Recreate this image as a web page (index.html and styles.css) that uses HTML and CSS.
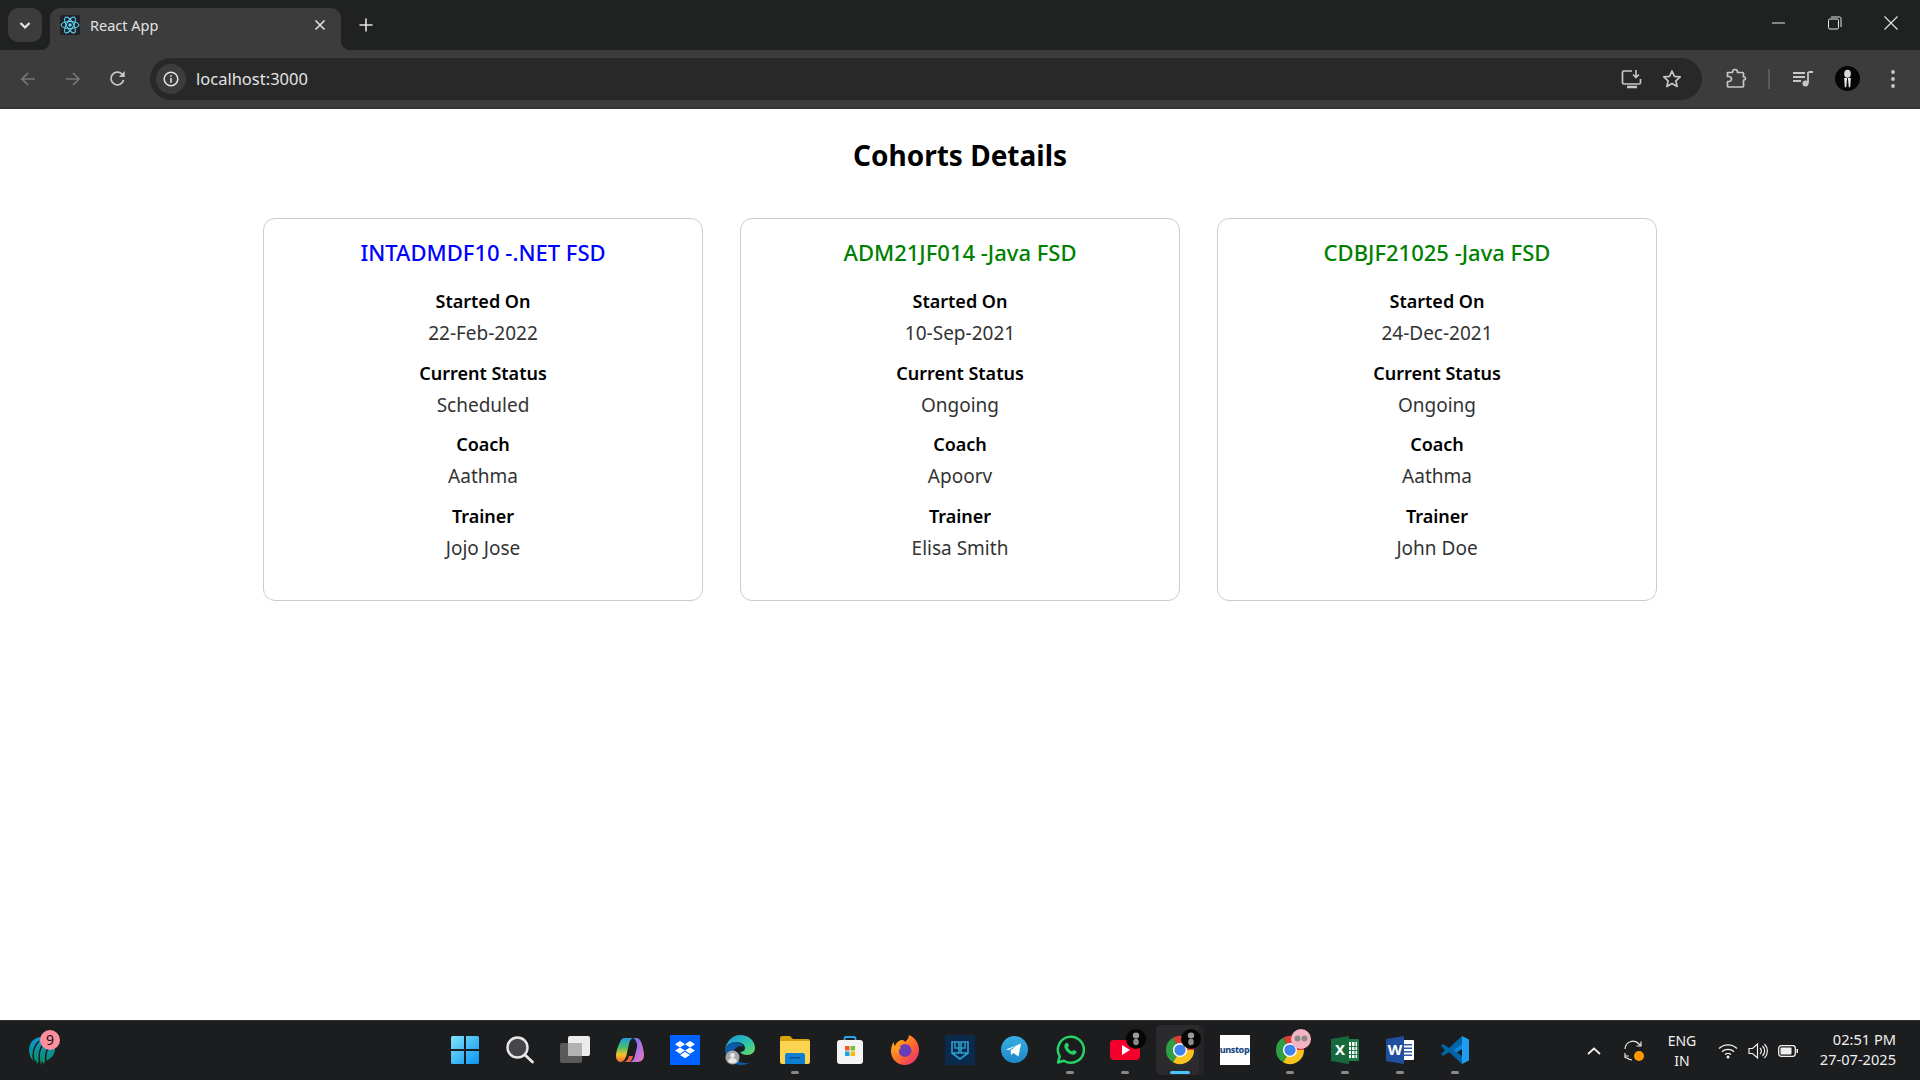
FILE: index.html
```html
<!DOCTYPE html>
<html lang="en">
<head>
  <meta charset="UTF-8">
  <title>React App</title>
  <link rel="stylesheet" href="styles.css">
</head>
<body>
  <svg class="defs" width="0" height="0">
    <symbol id="chrome" viewBox="0 0 32 32">
      <path fill="#db3f33" d="M16 16L8.500 3A15 15 0 0 1 31 16Z"/>
      <path fill="#f9c21e" d="M16 16L31 16A15 15 0 0 1 8.500 29Z"/>
      <path fill="#2f9e44" d="M16 16L8.500 29A15 15 0 0 1 8.500 3Z"/>
      <circle cx="16" cy="16" r="7.600" fill="#fff"/>
      <circle cx="16" cy="16" r="6" fill="#3f83ee"/>
    </symbol>
    <symbol id="person" viewBox="0 0 24 24">
      <circle cx="12" cy="12" r="12" fill="#050505"/>
      <ellipse cx="12" cy="7.500" rx="3.200" ry="3.800" fill="#d8d8d8"/>
      <path fill="#e8e8e8" d="M8.800 11.500h6.400l-.6 9h-1.400l-.6-7h-1.200l-.6 7H9.400z"/>
      <path fill="#111" d="M11.500 11.500h1v6h-1z"/>
    </symbol>
    <symbol id="person-badge" viewBox="0 0 20 20">
      <circle cx="10" cy="10" r="10" fill="#050505"/>
      <ellipse cx="10" cy="6.500" rx="3.200" ry="3" fill="#9a9a9a"/>
      <ellipse cx="10" cy="13" rx="2.800" ry="3.200" fill="#8a8a8a"/>
    </symbol>
  </svg>

  <div class="tabstrip">
    <button class="tab-list">
      <svg width="14" height="14" viewBox="0 0 14 14"><path d="M2.500 5l4.500 4.500L11.500 5" fill="none" stroke="#e8e8e8" stroke-width="2.200"/></svg>
    </button>
    <div class="tab">
      <svg class="favicon" width="20" height="20" viewBox="0 0 20 20">
        <rect width="20" height="20" rx="2" fill="#20232a"/>
        <g fill="none" stroke="#61dafb" stroke-width="1">
          <ellipse cx="10" cy="10" rx="9" ry="3.500"/>
          <ellipse cx="10" cy="10" rx="9" ry="3.500" transform="rotate(60 10 10)"/>
          <ellipse cx="10" cy="10" rx="9" ry="3.500" transform="rotate(120 10 10)"/>
        </g>
        <circle cx="10" cy="10" r="1.700" fill="#61dafb"/>
      </svg>
      <span class="tab-title">React App</span>
      <svg class="tab-close" width="12" height="12" viewBox="0 0 12 12"><path d="M1.500 1.500l9 9M10.500 1.500l-9 9" stroke="#e3e3e3" stroke-width="1.600"/></svg>
    </div>
    <svg class="new-tab" width="14" height="14" viewBox="0 0 14 14"><path d="M7 .5v13M.5 7h13" stroke="#e3e3e3" stroke-width="1.600"/></svg>
    <div class="win-controls">
      <span class="win-btn"><svg width="14" height="14" viewBox="0 0 14 14"><path d="M0 7h13" stroke="#e6e6e6"/></svg></span>
      <span class="win-btn"><svg width="14" height="14" viewBox="0 0 14 14"><rect x=".5" y="3" width="10" height="10" rx="1.500" fill="none" stroke="#e6e6e6"/><path d="M3 1h8.500a1.500 1.500 0 0 1 1.500 1.500V11" fill="none" stroke="#e6e6e6"/></svg></span>
      <span class="win-btn"><svg width="14" height="14" viewBox="0 0 14 14"><path d="M.5.500l13 13M13.500.500l-13 13" stroke="#e6e6e6" stroke-width="1.100"/></svg></span>
    </div>
  </div>

  <div class="toolbar">
    <span class="tool-btn"><svg width="16" height="16" viewBox="0 0 16 16"><path d="M15 8H2M8 2L2 8l6 6" fill="none" stroke="#767676" stroke-width="1.700"/></svg></span>
    <span class="tool-btn"><svg width="16" height="16" viewBox="0 0 16 16"><path d="M1 8h13M8 2l6 6-6 6" fill="none" stroke="#767676" stroke-width="1.700"/></svg></span>
    <span class="tool-btn"><svg width="17" height="17" viewBox="0 0 16 16"><path d="M13.700 9.500A6 6 0 1 1 12 3.600L14 5.500" fill="none" stroke="#c7c7c7" stroke-width="1.700"/><path d="M14.800 1v5.500H9.300z" fill="#c7c7c7"/></svg></span>
    <div class="omnibox">
      <span class="info-chip"><svg width="16" height="16" viewBox="0 0 16 16"><circle cx="8" cy="8" r="6.800" fill="none" stroke="#e3e3e3" stroke-width="1.500"/><path d="M7.200 7h1.600v4.800H7.200zM7.200 4.200h1.600v1.600H7.200z" fill="#e3e3e3"/></svg></span>
      <span class="url">localhost:3000</span>
      <span class="omni-btn"><svg width="22" height="20" viewBox="0 0 22 20"><path d="M11 15H3a1.500 1.500 0 0 1-1.500-1.500v-10A1.500 1.500 0 0 1 3 2h8M19.500 10v3.500A1.500 1.500 0 0 1 18 15h-7" fill="none" stroke="#c7c7c7" stroke-width="1.700"/><path d="M6 18h10" stroke="#c7c7c7" stroke-width="2.500"/><path d="M15 1v7M12 5.500l3 3 3-3" fill="none" stroke="#c7c7c7" stroke-width="1.600"/></svg></span>
      <span class="omni-btn"><svg width="20" height="20" viewBox="0 0 20 20"><path d="M10 2l2.400 5.300 5.800.6-4.300 3.900 1.200 5.700-5.100-2.900-5.100 2.900 1.200-5.700-4.300-3.900 5.800-.6z" fill="none" stroke="#c7c7c7" stroke-width="1.700" stroke-linejoin="round"/></svg></span>
    </div>
    <span class="tool-btn ext-btn"><svg width="21" height="21" viewBox="0 0 21 21"><path d="M1.500 4.500H6.500V4a2.500 2.500 0 0 1 5 0v.5h5a1 1 0 0 1 1 1v3.500h.5a1.500 1.500 0 0 1 0 3h-.5v6a1 1 0 0 1-1 1h-14a1 1 0 0 1-1-1v-4.500H3a2.500 2.500 0 0 0 0-5H1.500z" fill="none" stroke="#c7c7c7" stroke-width="1.700" stroke-linejoin="round"/></svg></span>
    <span class="tool-sep"></span>
    <span class="tool-btn"><svg width="20" height="16" viewBox="0 0 20 16"><path d="M0 2h12M0 6h12M0 10h8" stroke="#c7c7c7" stroke-width="1.800"/><path d="M15.500 1H20" stroke="#c7c7c7" stroke-width="2"/><path d="M15 1v11" stroke="#c7c7c7" stroke-width="1.800"/><circle cx="12.500" cy="12.500" r="3" fill="#c7c7c7"/></svg></span>
    <span class="tool-btn"><svg width="25" height="25"><use href="#person"/></svg></span>
    <span class="tool-btn"><svg width="4" height="18" viewBox="0 0 4 18"><circle cx="2" cy="2" r="1.900" fill="#c7c7c7"/><circle cx="2" cy="9" r="1.900" fill="#c7c7c7"/><circle cx="2" cy="16" r="1.900" fill="#c7c7c7"/></svg></span>
  </div>

  <main class="page">
    <h1 class="page-title">Cohorts Details</h1>
    <div class="cohorts">
      <section class="cohort-card">
        <h3 class="cohort-name blue">INTADMDF10 -.NET FSD</h3>
        <dl>
          <dt>Started On</dt><dd>22-Feb-2022</dd>
          <dt>Current Status</dt><dd>Scheduled</dd>
          <dt>Coach</dt><dd>Aathma</dd>
          <dt>Trainer</dt><dd>Jojo Jose</dd>
        </dl>
      </section>
      <section class="cohort-card">
        <h3 class="cohort-name green">ADM21JF014 -Java FSD</h3>
        <dl>
          <dt>Started On</dt><dd>10-Sep-2021</dd>
          <dt>Current Status</dt><dd>Ongoing</dd>
          <dt>Coach</dt><dd>Apoorv</dd>
          <dt>Trainer</dt><dd>Elisa Smith</dd>
        </dl>
      </section>
      <section class="cohort-card">
        <h3 class="cohort-name green">CDBJF21025 -Java FSD</h3>
        <dl>
          <dt>Started On</dt><dd>24-Dec-2021</dd>
          <dt>Current Status</dt><dd>Ongoing</dd>
          <dt>Coach</dt><dd>Aathma</dd>
          <dt>Trainer</dt><dd>John Doe</dd>
        </dl>
      </section>
    </div>
  </main>

  <footer class="taskbar">
    <div class="task-left">
      <span class="widget">
        <svg width="28" height="29" viewBox="0 0 28 29">
          <defs><linearGradient id="wg" x1="0" y1="0" x2="0" y2="1"><stop offset="0" stop-color="#0a9bd8"/><stop offset="1" stop-color="#0b8a5c"/></linearGradient></defs>
          <path fill="url(#wg)" d="M1 14C1 6 7 1 14 1s13 5 13 12c0 6-5 11-10 12l-1 3-2-3-1 4-2-4-2 3-1-4-2 2C3 23 1 19 1 14z"/>
          <path d="M6 26C4 18 6 10 11 5M12 28c-2-8-1-15 4-21M18 26c-1-6 0-11 3-15" fill="none" stroke="#1c1d1f" stroke-width="1.500"/>
        </svg>
        <span class="widget-badge">9</span>
      </span>
    </div>
    <div class="task-apps">
      <span class="app"><svg width="30" height="30" viewBox="0 0 30 30"><defs><linearGradient id="win" x1="0" y1="0" x2="1" y2="1"><stop offset="0" stop-color="#7fe4fb"/><stop offset="1" stop-color="#0a94f0"/></linearGradient></defs><path fill="url(#win)" d="M1 2.500A1.500 1.500 0 0 1 2.500 1H14v13H1zM16 1h11.500A1.500 1.500 0 0 1 29 2.500V14H16zM1 16h13v13H2.500A1.500 1.500 0 0 1 1 27.500zM16 16h13v11.500a1.500 1.500 0 0 1-1.500 1.500H16z"/></svg></span>
      <span class="app"><svg width="30" height="30" viewBox="0 0 30 30"><circle cx="12.500" cy="12.500" r="10" fill="#46464a" stroke="#e8e8e8" stroke-width="2.400"/><path d="M20 20l7.500 7" stroke="#e8e8e8" stroke-width="2.800" stroke-linecap="round"/></svg></span>
      <span class="app"><svg width="30" height="30" viewBox="0 0 30 30"><rect x="0" y="8" width="22" height="20" rx="2" fill="#5a5a5a"/><rect x="8" y="1" width="22" height="20" rx="2" fill="#ececec"/><rect x="8" y="8" width="14" height="13" fill="#b2b2b2"/></svg></span>
      <span class="app"><svg width="28" height="26" viewBox="0 0 28 26"><defs><linearGradient id="cp1" x1="0" y1="0" x2="0" y2="1"><stop offset="0" stop-color="#1f9de0"/><stop offset=".4" stop-color="#4cc06a"/><stop offset=".7" stop-color="#f6c324"/><stop offset="1" stop-color="#f0623a"/></linearGradient><linearGradient id="cp2" x1="0" y1="0" x2="1" y2="1"><stop offset="0" stop-color="#3f8cf0"/><stop offset=".55" stop-color="#b36fe8"/><stop offset="1" stop-color="#f27ba0"/></linearGradient></defs><path fill="url(#cp2)" d="M17 1h3c3 0 4.500 2 5.500 5 1 3 2.500 8 2.500 12 0 4-2.500 7-6 7h-8c3-1 4-3 5-7l2-8c.5-3-.5-7-4-9z"/><path fill="url(#cp1)" d="M9 1h8c-2.500 1-3.500 3-4 6l-2.500 11c-1 4-3 7-6 7-2.500 0-4.500-2.500-4.500-6 0-5 2-10 4-14 1-2.500 2.500-4 5-4z"/><path fill="#f0623a" d="M7 25c3 0 5-2 6-6h4c-.5 3-2 5-3.500 6z"/></svg></span>
      <span class="app"><svg width="30" height="30" viewBox="0 0 30 30"><rect width="30" height="30" fill="#0061fe"/><path fill="#fff" d="M10 6l5 3.200-5 3.200-5-3.200zM20 6l5 3.200-5 3.200-5-3.200zM5 15.600l5-3.200 5 3.200-5 3.200zM15 15.600l5-3.200 5 3.200-5 3.200zM10 20l5-3.200L20 20l-5 3.200z"/></svg></span>
      <span class="app"><svg width="30" height="30" viewBox="0 0 30 30"><defs><linearGradient id="edge" x1="0" y1="0" x2="1" y2="1"><stop offset="0" stop-color="#1d8fe0"/><stop offset=".55" stop-color="#2cc4b0"/><stop offset="1" stop-color="#6edc5a"/></linearGradient></defs><path fill="url(#edge)" d="M15 0c9 0 15 6 15 13 0 4-3 7-8 7-3 0-6-1-7-3 2 0 5-1 5-4 0-4-5-6-9-6-6 0-10 4-11 8C1 7 7 0 15 0z"/><path fill="#0c59a4" d="M0 15c1-4 5-8 10-8 4 0 8 2 8 5-2-1-5-1-7 1-3 2-3 7-1 10 2 2 5 5 10 5 2 0 4 0 6-1-3 2-6 3-9 3C7 30 0 23 0 15z"/><circle cx="7.500" cy="22.500" r="7" fill="#a6a6a6"/><circle cx="7.500" cy="20.500" r="2.400" fill="#e8e8e8"/><path d="M3 26.500c.5-2.500 2.500-3.500 4.500-3.500s4 1 4.500 3.500a7 7 0 0 1-9 0z" fill="#e8e8e8"/></svg></span>
      <span class="app run"><svg width="30" height="28" viewBox="0 0 30 28"><path fill="#d9a011" d="M0 2a2 2 0 0 1 2-2h8l3 3h15a2 2 0 0 1 2 2v3H0z"/><path fill="#fcd450" d="M0 5h30v21a2 2 0 0 1-2 2H2a2 2 0 0 1-2-2z"/><path fill="#0f7fd6" d="M5 19a2 2 0 0 1 2-2h16a2 2 0 0 1 2 2v9H5z"/><path fill="#0c4f8b" d="M10 21h10v1.500H10z"/></svg></span>
      <span class="app"><svg width="30" height="30" viewBox="0 0 30 30"><path d="M9.500 6V3.500A1.500 1.500 0 0 1 11 2h8a1.500 1.500 0 0 1 1.500 1.500V6" fill="none" stroke="#26a6e8" stroke-width="1.800"/><rect x="2" y="5" width="26" height="24" rx="3" fill="#f4f4f4"/><path fill="#ea5a2a" d="M10 11h4.500v4.500H10z"/><path fill="#7cba2e" d="M15.500 11H20v4.500h-4.500z"/><path fill="#1aa3e8" d="M10 16.500h4.500V21H10z"/><path fill="#fbb90f" d="M15.500 16.500H20V21h-4.500z"/></svg></span>
      <span class="app"><svg width="30" height="30" viewBox="0 0 30 30"><defs><linearGradient id="ff" x1="0" y1="0" x2="1" y2="1"><stop offset="0" stop-color="#ffc21a"/><stop offset=".55" stop-color="#ff6a2a"/><stop offset="1" stop-color="#e3208f"/></linearGradient></defs><path fill="url(#ff)" d="M19 0c7 3 10 9 10 15 0 8-6 15-14 15S1 24 1 16c0-3 1-7 3-9 0 2 0 3 1 4 1-3 3-5 6-6 2 0 3 0 4 2 2-2 4-4 4-7z"/><circle cx="15" cy="15.500" r="6.500" fill="#6a3db8"/><path fill="#ff9a1f" d="M5 11c3-1 5 0 6 2-2 1-3 3-2 6-3-1-5-4-4-8z"/></svg></span>
      <span class="app"><svg width="30" height="30" viewBox="0 0 30 30"><rect width="30" height="30" fill="#0a2a4d"/><path d="M7 7h7v11H7zM16 7h7v11h-7zM7 18l8 6 8-6" fill="none" stroke="#2e9fd0" stroke-width="1.600"/><path d="M10 7v6h4M16 13h4V7" fill="none" stroke="#2e9fd0" stroke-width="1.400"/></svg></span>
      <span class="app"><svg width="27" height="27" viewBox="0 0 27 27"><defs><linearGradient id="tg" x1="0" y1="0" x2="0" y2="1"><stop offset="0" stop-color="#37aee2"/><stop offset="1" stop-color="#1e88c7"/></linearGradient></defs><circle cx="13.500" cy="13.500" r="13.500" fill="url(#tg)"/><path fill="#fff" d="M5 13.500l15-6-2.500 13-5-3.500-2.300 2-.7-4.500 7-5.500-8.700 5z"/></svg></span>
      <span class="app run"><svg width="30" height="30" viewBox="0 0 30 30"><path d="M3 27.500l1.700-6.200A13 13 0 1 1 9 25.700z" fill="none" stroke="#25d366" stroke-width="2.500" stroke-linejoin="round"/><path d="M10.500 8.500c1-1 2-.8 2.500 0l1 2.300-1.300 1.700c1 1.800 2.400 3.100 4.300 4l1.600-1.500 2.400 1.100c.7.500.7 1.500 0 2.500-1 1.200-2.800 1.500-5 .6-3-1.200-5.500-3.700-6.500-6.800-.4-1.600 0-2.900 1-3.900z" fill="#25d366"/></svg></span>
      <span class="app run"><svg width="30" height="20" viewBox="0 0 30 20"><rect width="30" height="20" rx="4" fill="#f5002c"/><path fill="#fff" d="M12 5l8 5-8 5z"/></svg><svg class="app-badge" width="20" height="20"><use href="#person-badge"/></svg></span>
      <span class="app run active"><svg width="30" height="30"><use href="#chrome"/></svg><svg class="app-badge" width="20" height="20"><use href="#person-badge"/></svg></span>
      <span class="app"><span class="unstop">unstop</span></span>
      <span class="app run"><svg width="30" height="30"><use href="#chrome"/></svg><svg class="app-badge" width="20" height="20" viewBox="0 0 20 20"><circle cx="10" cy="10" r="10" fill="#f2b4c4"/><circle cx="6.500" cy="9.500" r="3" fill="#8a8a8a"/><circle cx="13.500" cy="9.500" r="3" fill="#8a8a8a"/></svg></span>
      <span class="app run"><svg width="28" height="28" viewBox="0 0 28 28"><path fill="#1f7a47" d="M17 3h10a1 1 0 0 1 1 1v20a1 1 0 0 1-1 1H17z"/><path fill="#fff" d="M17 6h9v16h-9z"/><path fill="#1f7a47" d="M20 6h1v16h-1zM23.500 6h1v16h-1zM17 10h9v1h-9zM17 14h9v1h-9zM17 18h9v1h-9z"/><path fill="#16693c" d="M0 3l18-3v28L0 25z"/><text class="doc-letter" x="9" y="19" text-anchor="middle">X</text></svg></span>
      <span class="app run"><svg width="28" height="28" viewBox="0 0 28 28"><path fill="#fff" d="M16 4h11a1 1 0 0 1 1 1v18a1 1 0 0 1-1 1H16z"/><path fill="#2b5aa8" d="M18 8h8v1.500h-8zM18 11.500h8V13h-8zM18 15h8v1.500h-8zM18 18.500h8V20h-8z"/><path fill="#1f4f9e" d="M0 3l18-3v28L0 25z"/><text class="doc-letter" x="9" y="19" text-anchor="middle">W</text></svg></span>
      <span class="app run"><svg width="30" height="30" viewBox="0 0 30 30"><path fill="#0065a9" d="M1 11l2-2 6 4L22 1v8l-9 6 9 6v8L9 17l-6 4-2-2 4-4z"/><path fill="#1f9cf0" d="M22 1l7 3.500v21L22 29z"/><path fill="#0a85d8" d="M22 9l-9 6 3.500 2.500L22 14z"/></svg></span>
    </div>
    <div class="tray">
      <span class="tray-item"><svg width="14" height="8" viewBox="0 0 14 8"><path d="M1 7l6-5.500L13 7" fill="none" stroke="#f0f0f0" stroke-width="1.800"/></svg></span>
      <span class="tray-item"><svg width="22" height="22" viewBox="0 0 22 22"><path d="M2 9a8 8 0 0 1 14-5l2 2M18 1.500V6h-4.500M2 16h4M2 13v4.500l2 .5a8 8 0 0 0 5 2" fill="none" stroke="#e8e8e8" stroke-width="1.200"/><circle cx="16" cy="16" r="5" fill="#ff9800"/></svg></span>
      <span class="lang">ENG<br>IN</span>
      <span class="tray-icon"><svg width="20" height="16" viewBox="0 0 20 16"><path d="M1 5.500a13 13 0 0 1 18 0M4 8.700a9 9 0 0 1 12 0M7 11.500a5 5 0 0 1 6 0" fill="none" stroke="#f0f0f0" stroke-width="1.400"/><circle cx="10" cy="14" r="1.500" fill="#f0f0f0"/></svg></span>
      <span class="tray-icon"><svg width="20" height="18" viewBox="0 0 20 18"><path d="M1 6.500h3.500L9.500 2v14l-5-4.500H1z" fill="none" stroke="#f0f0f0" stroke-width="1.200"/><path d="M12 6a4 4 0 0 1 0 6M14.500 4a7 7 0 0 1 0 10M16.500 2a10 10 0 0 1 0 14" fill="none" stroke="#f0f0f0" stroke-width="1.200"/></svg></span>
      <span class="tray-icon"><svg width="20" height="12" viewBox="0 0 20 12"><rect x=".7" y=".7" width="16.600" height="10.600" rx="2.500" fill="none" stroke="#f0f0f0" stroke-width="1.300"/><rect x="2.500" y="2.500" width="11" height="7" rx="1" fill="#f0f0f0"/><path d="M18.500 4h1.500v4h-1.500z" fill="#f0f0f0"/></svg></span>
      <span class="clock">02:51 PM<br>27-07-2025</span>
    </div>
  </footer>
</body>
</html>
```

FILE: styles.css
```css
* {margin:0; padding:0; box-sizing:border-box;}
html, body {height:100%;}
body {
  display:flex;
  flex-direction:column;
  height:1080px;
  overflow:hidden;
  font-family:"Noto Sans", "Open Sans", sans-serif;
  background:#fff;
}
.defs {display:block; height:0;}

/* tab strip */
.tabstrip {
  display:flex;
  align-items:flex-end;
  height:50px;
  padding-left:8px;
  background:#202222;
}
.tab-list {
  display:flex;
  align-items:center;
  justify-content:center;
  width:34px;
  height:34px;
  margin-bottom:8px;
  border:0;
  border-radius:10px;
  background:#3c3c3c;
}
.tab {
  display:flex;
  align-items:center;
  position:relative;
  width:291px;
  height:42px;
  margin-left:8px;
  padding:0 15px 8px 10px;
  border-radius:10px 10px 0 0;
  background:#3c3c3c;
}
.tab::before, .tab::after {
  content:"";
  position:absolute;
  bottom:0;
  width:10px;
  height:10px;
}
.tab::before {left:-10px; background:radial-gradient(circle at 0 0, #202222 10px, #3c3c3c 10.5px);}
.tab::after {right:-10px; background:radial-gradient(circle at 100% 0, #202222 10px, #3c3c3c 10.5px);}
.tab-title {
  flex:1;
  margin-left:10px;
  color:#e3e3e3;
  font-size:14.500px;
}
.new-tab {margin:0 0 18px 18px;}
.win-controls {display:flex; margin-left:auto; height:50px; padding-right:1px;}
.win-btn {
  display:flex;
  align-items:center;
  justify-content:center;
  width:56px;
  height:46px;
}

/* toolbar */
.toolbar {
  display:flex;
  align-items:center;
  height:59px;
  padding:0 5px;
  background:#3c3c3c;
  border-bottom:2px solid #333;
}
.tool-btn {
  display:flex;
  align-items:center;
  justify-content:center;
  width:45px;
  height:42px;
}
.omnibox {
  display:flex;
  align-items:center;
  flex:1;
  height:42px;
  margin-left:10px;
  padding:0 10px 0 6px;
  border-radius:21px;
  background:#282828;
}
.info-chip {
  display:flex;
  align-items:center;
  justify-content:center;
  width:30px;
  height:30px;
  border-radius:50%;
  background:#3c3c3c;
}
.url {
  flex:1;
  margin-left:10px;
  color:#e3e3e3;
  font-size:16.500px;
}
.omni-btn {
  display:flex;
  align-items:center;
  justify-content:center;
  width:40px;
  height:30px;
}
.ext-btn {margin-left:12px;}
.tool-sep {
  width:2px;
  height:20px;
  margin:0 10px 0 9px;
  background:#5a5a5a;
}

/* page */
.page {flex:1; padding-top:27px;}
.page-title {
  height:82px;
  color:#000;
  font-size:28px;
  font-weight:700;
  line-height:38px;
  text-align:center;
}
.cohorts {
  display:flex;
  justify-content:center;
  gap:37px;
}
.cohort-card {
  width:440px;
  height:383px;
  padding-top:16px;
  border:1px solid #ccc;
  border-radius:12px;
  text-align:center;
}
.cohort-name {
  font-size:22px;
  font-weight:500;
  line-height:34px;
  margin-bottom:19px;
}
.blue {color:#00f;}
.green {color:#008000;}
dt {
  color:#000;
  font-size:18px;
  font-weight:600;
  line-height:26px;
  margin-bottom:6px;
}
dd {
  color:#333;
  font-size:19px;
  line-height:26px;
  margin-bottom:13.500px;
}

/* taskbar */
.taskbar {
  display:flex;
  align-items:center;
  height:60px;
  background:#1c1d1f;
  border-top:1px solid #333;
}
.task-left {width:437px; padding-left:28px;}
.widget {display:block; position:relative; width:28px; height:29px;}
.widget-badge {
  position:absolute;
  top:-6px;
  left:12px;
  width:20px;
  height:20px;
  border-radius:50%;
  background:#ff8e9e;
  color:#111;
  font-size:14px;
  line-height:20px;
  text-align:center;
}
.task-apps {display:flex;}
.app {
  display:flex;
  align-items:center;
  justify-content:center;
  position:relative;
  z-index:0;
  width:55px;
  height:50px;
  margin-bottom:2px;
}
.run::after {
  content:"";
  position:absolute;
  bottom:1px;
  left:23.500px;
  width:8px;
  height:3px;
  border-radius:2px;
  background:#8a8a8a;
}
.active::before {
  content:"";
  position:absolute;
  z-index:-1;
  top:0;
  bottom:0;
  left:4px;
  right:8px;
  border-radius:5px;
  background:#2b2b2d;
  box-shadow:5px 0 0 #242426;
}
.active::after {left:17.500px; width:20px; background:#4cc2ff;}
.app-badge {position:absolute; top:4px; right:6.500px;}
.unstop {
  display:block;
  width:30px;
  height:30px;
  background:#fff;
  color:#1c4a86;
  font-size:9px;
  font-weight:800;
  letter-spacing:-.4px;
  line-height:30px;
  text-align:center;
}
.doc-letter {fill:#fff; font-size:15px; font-weight:700; font-family:"Noto Sans", sans-serif;}
.tray {
  display:flex;
  align-items:center;
  margin-left:auto;
  padding-right:24px;
  color:#f0f0f0;
}
.tray-item, .tray-icon {
  display:flex;
  align-items:center;
  justify-content:center;
  width:40px;
  height:40px;
}
.tray-icon {width:30px;}
.lang {
  width:56px;
  margin-right:3px;
  font-size:14px;
  line-height:20px;
  text-align:center;
}
.clock {
  width:93px;
  margin-bottom:3px;
  font-size:14.600px;
  line-height:20px;
  text-align:right;
}
```
